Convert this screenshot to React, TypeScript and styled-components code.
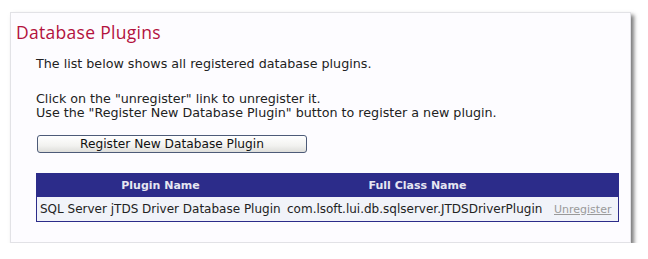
import styled, { createGlobalStyle } from "styled-components"

const GlobalStyle = createGlobalStyle`
  body {
    margin: 0;
    background: #ffffff;
    font-family: "DejaVu Sans", Verdana, sans-serif;
  }
`

const Panel = styled.div`
  margin: 12px 0 0 10px;
  width: 621px;
  height: 231px;
  background: #fdfcff;
  border: 1px solid #e2e2e6;
  box-shadow: 3px 3px 4px #7a7a7a;
  padding: 9px 0 0 5px;
  box-sizing: border-box;
`

const Title = styled.h1`
  margin: 0;
  font-family: "Open Sans", "DejaVu Sans", sans-serif;
  font-size: 17.5px;
  letter-spacing: 0.3px;
  font-weight: normal;
  color: #b3123e;
  line-height: 20px;
`

const Body = styled.div`
  padding: 15px 0 0 20px;
  font-size: 12.7px;
  color: #222;
  line-height: 14px;
`

const Para = styled.p`
  margin: 0 0 21px 0;
  &:last-of-type {
    margin-bottom: 15px;
  }
`

const RegisterButton = styled.button`
  display: block;
  margin: 0 0 0 1px;
  width: 270px;
  height: 18px;
  padding: 0;
  font-family: "DejaVu Sans", Verdana, sans-serif;
  font-size: 12.2px;
  line-height: 16px;
  color: #111;
  border: 1px solid #4d5b78;
  border-radius: 3px;
  background: linear-gradient(#ffffff, #f2f2f0 60%, #dededa);
`

const Table = styled.table`
  margin-top: 20px;
  width: 581px;
  border-collapse: collapse;
  border: 1px solid #2c2c8a;
  font-size: 12px;
  table-layout: fixed;
`

const HeadCell = styled.th<{ w: number }>`
  width: ${(p) => p.w}px;
  background: #2c2c8a;
  color: #e6e6f2;
  font-size: 11px;
  font-weight: bold;
  height: 23px;
  padding: 0;
  text-align: center;
`

const Cell = styled.td`
  background: #f1f3f9;
  color: #222;
  height: 24px;
  padding: 0 3px;
  white-space: nowrap;
`

const Link = styled.a`
  color: #9a9a9a;
  font-size: 11px;
  text-decoration: underline;
`

export default function App() {
  return (
    <>
      <GlobalStyle />
      <Panel>
        <Title>Database Plugins</Title>
        <Body>
          <Para>The list below shows all registered database plugins.</Para>
          <Para>
            Click on the "unregister" link to unregister it.
            <br />
            Use the "Register New Database Plugin" button to register a new plugin.
          </Para>
          <RegisterButton>Register New Database Plugin</RegisterButton>
          <Table>
            <thead>
              <tr>
                <HeadCell w={247}>Plugin Name</HeadCell>
                <HeadCell w={267}>Full Class Name</HeadCell>
                <HeadCell w={67}></HeadCell>
              </tr>
            </thead>
            <tbody>
              <tr>
                <Cell>SQL Server jTDS Driver Database Plugin</Cell>
                <Cell>com.lsoft.lui.db.sqlserver.JTDSDriverPlugin</Cell>
                <Cell>
                  <Link href="#">Unregister</Link>
                </Cell>
              </tr>
            </tbody>
          </Table>
        </Body>
      </Panel>
    </>
  )
}
